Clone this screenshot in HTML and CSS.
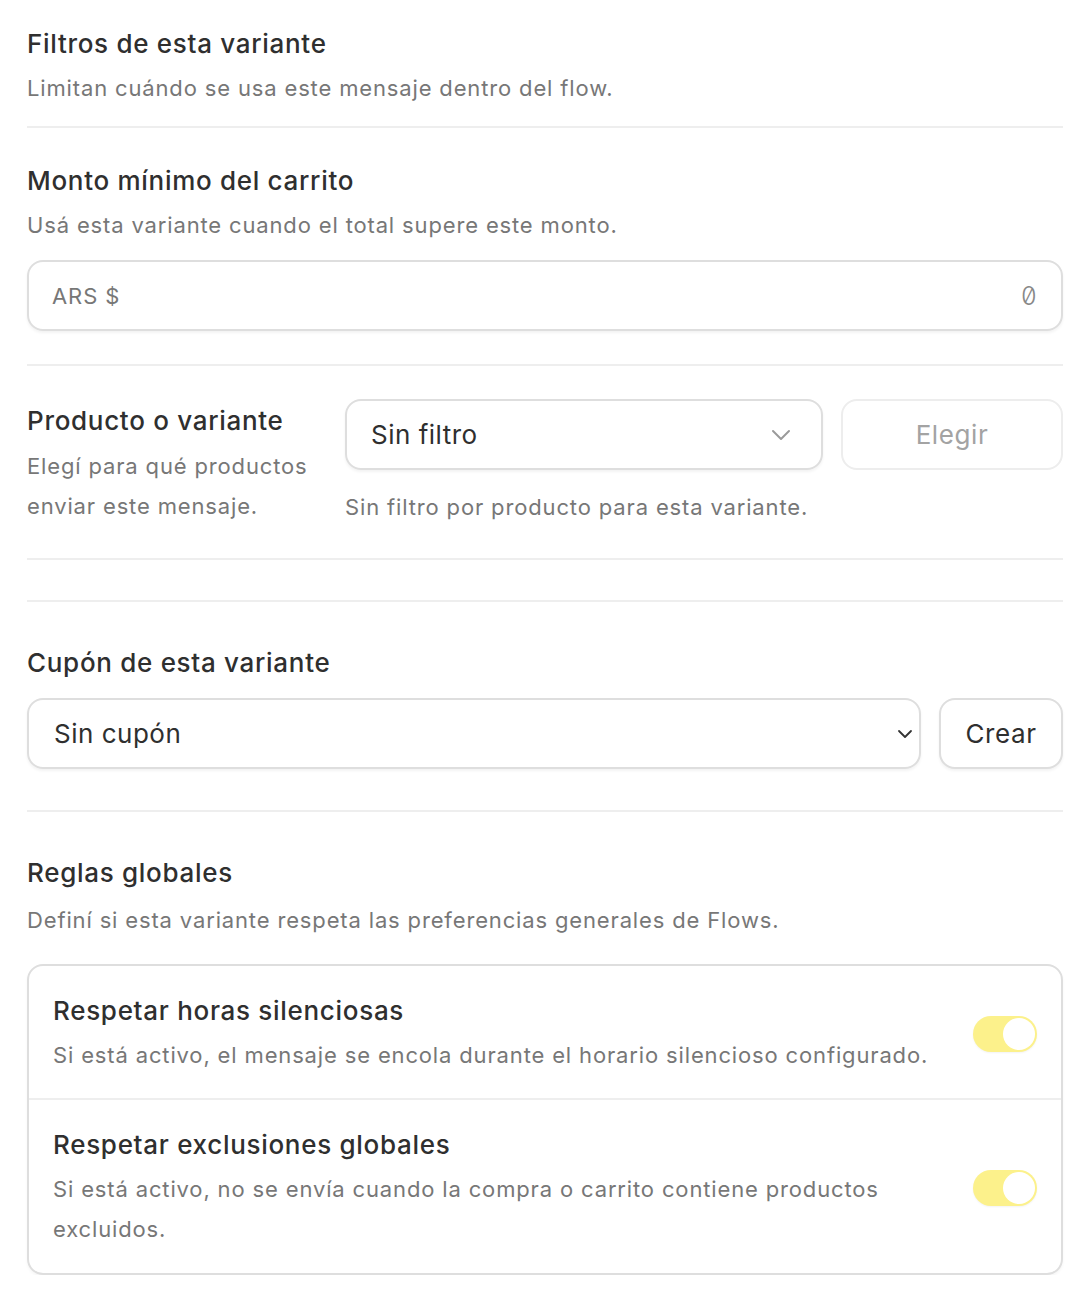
FILE: index.html
```html
<!DOCTYPE html>
<html lang="es">
<head>
<meta charset="utf-8">
<link rel="stylesheet" href="styles.css">
</head>
<body>
<div class="page">
  <section class="sec sec-head">
    <h2 class="title">Filtros de esta variante</h2>
    <p class="desc">Limitan cuándo se usa este mensaje dentro del flow.</p>
  </section>

  <section class="sec sec-monto">
    <h2 class="title">Monto mínimo del carrito</h2>
    <p class="desc">Usá esta variante cuando el total supere este monto.</p>
    <div class="input">
      <span class="prefix">ARS $</span>
      <span class="value">0</span>
    </div>
  </section>

  <section class="sec sec-prod">
    <div class="prod-left">
      <h2 class="title">Producto o variante</h2>
      <p class="desc desc-wrap">Elegí para qué productos enviar este mensaje.</p>
    </div>
    <div class="prod-right">
      <div class="controls">
        <div class="select select-prod">
          <span>Sin filtro</span>
          <svg class="chev" width="20" height="12" viewBox="0 0 20 12"><path d="M2 2 L10 10 L18 2" fill="none" stroke="#9a9a9a" stroke-width="2" stroke-linecap="round" stroke-linejoin="round"/></svg>
        </div>
        <button class="btn btn-disabled">Elegir</button>
      </div>
      <p class="desc hint">Sin filtro por producto para esta variante.</p>
    </div>
  </section>

  <div class="spacer-sec"></div>

  <section class="sec sec-cupon">
    <h2 class="title">Cupón de esta variante</h2>
    <div class="controls">
      <div class="select select-cupon">
        <span>Sin cupón</span>
        <svg class="chev" width="16" height="10" viewBox="0 0 16 10"><path d="M2 2 L8 8 L14 2" fill="none" stroke="#333" stroke-width="1.8" stroke-linecap="round" stroke-linejoin="round"/></svg>
      </div>
      <button class="btn">Crear</button>
    </div>
  </section>

  <section class="sec sec-reglas">
    <h2 class="title">Reglas globales</h2>
    <p class="desc">Definí si esta variante respeta las preferencias generales de Flows.</p>
    <div class="card">
      <div class="card-row">
        <div class="card-text">
          <h3 class="row-title">Respetar horas silenciosas</h3>
          <p class="desc">Si está activo, el mensaje se encola durante el horario silencioso configurado.</p>
        </div>
        <span class="toggle"><span class="knob"></span></span>
      </div>
      <div class="card-row">
        <div class="card-text">
          <h3 class="row-title">Respetar exclusiones globales</h3>
          <p class="desc">Si está activo, no se envía cuando la compra o carrito contiene productos excluidos.</p>
        </div>
        <span class="toggle"><span class="knob"></span></span>
      </div>
    </div>
  </section>
</div>
</body>
</html>
```

FILE: styles.css
```css
* { box-sizing: border-box; }
html, body { margin: 0; padding: 0; background: #fff; }
body {
  font-family: Inter, "Noto Sans", sans-serif;
  color: #2f2f2f;
}
.page {
  padding: 26px 21px 0 27px;
  width: 1084px;
}
.title {
  margin: 0;
  font-size: 26px;
  font-weight: 500;
  line-height: 36px;
  letter-spacing: 0.7px;
  color: #2f2f2f;
}
.desc {
  margin: 0;
  font-size: 22px;
  line-height: 40px;
  color: #777;
  letter-spacing: 0.85px;
}
.sec {
  border-bottom: 2px solid #eeeeee;
}
.sec-head {
  padding-bottom: 18px;
}
.sec-head .desc { margin-top: 6px; }
.sec-monto {
  padding-top: 35px;
  padding-bottom: 33px;
}
.sec-monto .desc { margin-top: 6px; }
.input {
  margin-top: 15px;
  height: 71px;
  border: 2px solid #dedede;
  border-radius: 16px;
  box-shadow: 0 2px 3px rgba(0,0,0,0.05);
  display: flex;
  align-items: center;
  justify-content: space-between;
  padding: 0 24px 0 23px;
}
.prefix { font-size: 22px; color: #777; letter-spacing: 0.9px; }
.value {
  font-family: Inter, sans-serif;
  font-feature-settings: "zero" 1, "tnum" 1;
  font-size: 25px;
  font-weight: 300;
  color: #888;
}
.sec-prod {
  display: flex;
  gap: 28px;
  padding-top: 33px;
  padding-bottom: 31px;
}
.prod-left { width: 290px; flex: none; padding-top: 4px; }
.prod-left .desc { margin-top: 7px; }
.prod-right { flex: 1; }
.controls {
  display: flex;
  gap: 18px;
}
.select {
  flex: 1;
  height: 71px;
  border: 2px solid #dedede;
  border-radius: 16px;
  box-shadow: 0 2px 3px rgba(0,0,0,0.05);
  display: flex;
  align-items: center;
  justify-content: space-between;
  font-size: 26px;
  letter-spacing: 0.5px;
  color: #2f2f2f;
}
.select-prod { padding: 0 30px 0 24px; }
.select-cupon { padding: 0 6px 0 25px; }
.btn {
  font-family: inherit;
  height: 71px;
  background: #fff;
  border: 2px solid #dedede;
  border-radius: 16px;
  box-shadow: 0 2px 3px rgba(0,0,0,0.05);
  font-size: 26px;
  letter-spacing: 0.6px;
  color: #2f2f2f;
  padding: 0 24px;
}
.btn-disabled {
  width: 222px;
  color: #a3a3a3;
  border-color: #ededed;
  box-shadow: none;
}
.hint { margin-top: 17px; }
.spacer-sec {
  height: 42px;
  border-bottom: 2px solid #eeeeee;
}
.sec-cupon {
  padding-top: 43px;
  padding-bottom: 41px;
}
.sec-cupon .controls { margin-top: 17px; }
.sec-cupon .btn { width: 124px; padding: 0; }
.sec-reglas {
  border-bottom: none;
  padding-top: 43px;
}
.sec-reglas .desc { margin-top: 9px; }
.card {
  margin-top: 24px;
  border: 2px solid #dedede;
  border-radius: 16px;
  box-shadow: 0 2px 3px rgba(0,0,0,0.04);
}
.card-row {
  display: flex;
  align-items: center;
  gap: 40px;
  padding: 27px 24px 23px 24px;
}
.card-row + .card-row { border-top: 2px solid #eeeeee; padding-bottom: 24px; }
.card-text { flex: 1; }
.row-title {
  margin: 0;
  font-size: 26px;
  font-weight: 500;
  line-height: 36px;
  letter-spacing: 0.7px;
  color: #2f2f2f;
}
.card-text .desc { margin-top: 6px; }
.toggle {
  flex: none;
  width: 64px;
  height: 36px;
  border-radius: 18px;
  background: #fcf18b;
  position: relative;
  box-shadow: 0 1px 2px rgba(0,0,0,0.05);
}
.knob {
  position: absolute;
  right: 2px;
  top: 2px;
  width: 32px;
  height: 32px;
  border-radius: 50%;
  background: #fff;
}
```
